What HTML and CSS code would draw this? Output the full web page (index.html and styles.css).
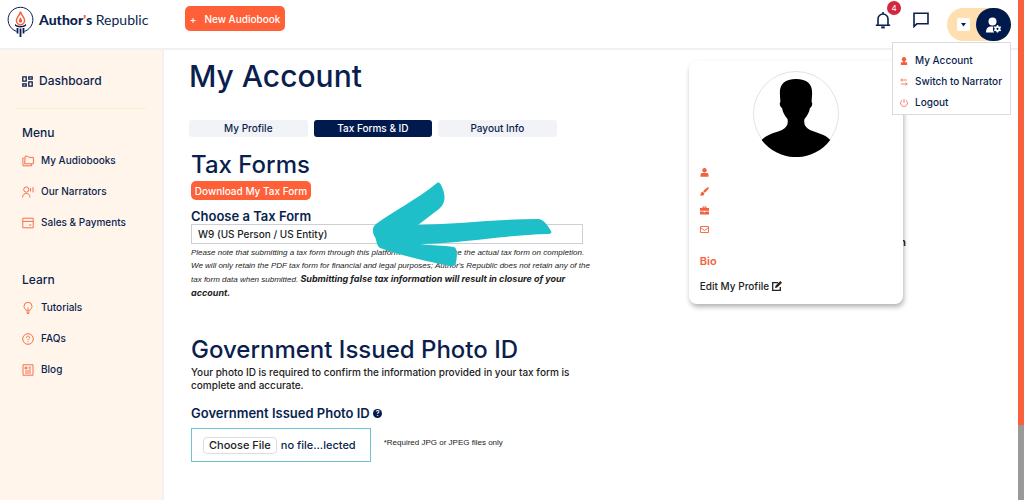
FILE: index.html
```html
<!DOCTYPE html>
<html lang="en">
<head>
  <meta charset="UTF-8">
  <title>My Account - Author's Republic</title>
  <meta name="viewport" content="width=device-width, initial-scale=1.0">
  <link rel="stylesheet" href="styles.css">
</head>
<body>
  <div class="page">
    <header class="topbar">
      <a class="logo" href="#">
        <svg width="27" height="31" viewBox="0 0 27 31">
          <path d="M9.5 25.4A12.4 12.4 0 1 1 17.5 25.4" fill="none" stroke="#0b1f4f" stroke-width="1"/>
          <path d="M13.5 5.5C13.9 9 17.6 11.2 17.6 14.6a4.1 4.1 0 0 1-8.2 0C9.4 11.2 13.1 9 13.5 5.5z" fill="none" stroke="#f4603e" stroke-width="1.5"/>
          <path d="M13.5 11c.4 1.600 1.700 2.400 1.700 4a1.700 1.700 0 0 1-3.400 0c0-1.600 1.300-2.400 1.700-4z" fill="#f4603e"/>
          <path d="M8 18c2.500 2.600 8.500 2.600 11 0v1.800c-3 2.200-8 2.200-11 0z" fill="#0b1f4f"/>
          <path d="M10.500 22v5.500M13.500 22.500V31M16.500 22v5.500" stroke="#0b1f4f" stroke-width="1.800"/>
        </svg>
        <span class="logo-text"><b>Author<i>'</i>s</b> Republic</span>
      </a>
      <button class="btn new-book"><span class="plus">+</span>New Audiobook</button>
      <div class="tools">
        <button class="icon-btn bell" aria-label="Notifications">
          <svg width="16" height="18" viewBox="0 0 16 18" fill="none" stroke="#0b1f4f" stroke-width="1.600">
            <path d="M3 14V8a5 5 0 0 1 10 0v6M.8 14.200h14.400M8 3V1"/>
            <path d="M6.200 16.400h3.600" stroke-width="2"/>
          </svg>
          <span class="badge">4</span>
        </button>
        <button class="icon-btn" aria-label="Messages">
          <svg width="16" height="16" viewBox="0 0 16 16" fill="none" stroke="#0b1f4f" stroke-width="1.600">
            <path d="M1 14.500V1.200h14v10.600H3.800z"/>
          </svg>
        </button>
        <div class="account">
          <button class="account-toggle" aria-label="Account menu">
            <span class="caret"><svg width="5" height="4" viewBox="0 0 5 4"><path d="M0 0h5L2.500 3.500z" fill="#0b1f4f"/></svg></span>
            <span class="account-icon">
              <svg width="16" height="16" viewBox="0 0 16 16" fill="#fff">
                <circle cx="6.500" cy="4.500" r="4"/>
                <path d="M0 15.500c0-4 2-6 5-6h2.500c-1 2-.7 4.500.7 6z"/>
                <circle cx="11.500" cy="11.800" r="2" fill="none" stroke="#fff" stroke-width="1.800"/>
                <path d="M11.500 8v1.500M11.500 14.100v1.500M8.200 9.900l1.400.8M13.400 12.900l1.400.8M8.200 13.700l1.400-.8M13.400 10.700l1.400-.8" stroke="#fff" stroke-width="1.500"/>
              </svg>
            </span>
          </button>
          <nav class="dropdown">
            <a href="#">
              <svg width="8" height="8" viewBox="0 0 8 8" fill="#f4603e"><circle cx="4" cy="2.200" r="2.200"/><path d="M3 4h2v1.200h2.200V8H.8V5.200H3z"/></svg>
              My Account
            </a>
            <a href="#">
              <svg width="8" height="8" viewBox="0 0 8 8" fill="none" stroke="#f4603e" stroke-width=".8"><path d="M7 2H.8M2.300.5L.8 2l1.500 1.500M1 6h6.200M5.700 4.500L7.200 6 5.700 7.500"/></svg>
              Switch to Narrator
            </a>
            <a href="#">
              <svg width="8" height="8" viewBox="0 0 8 8" fill="none" stroke="#f4603e" stroke-width=".8"><path d="M2.200 1.200a3.400 3.400 0 1 0 3.600 0M4 0v4"/></svg>
              Logout
            </a>
          </nav>
        </div>
      </div>
    </header>

    <div class="body">
      <aside class="sidebar">
        <a class="dashboard" href="#">
          <svg width="11" height="11" viewBox="0 0 11 11" fill="none" stroke="#0b1f4f" stroke-width="1.300"><path d="M.8.8h3.400v4.400H.8zM6.800.8h3.400v2.400H6.800zM.8 7.800h3.400v2.400H.8zM6.800 5.800h3.400v4.400H6.800z"/></svg>
          Dashboard
        </a>
        <h2>Menu</h2>
        <ul>
          <li><a href="#">
            <svg width="12" height="12" viewBox="0 0 12 12"><path d="M3.200 1.200h2.600l1 1.200h4.600v6.400H2.600zM2.600 3.200H.8L1 10.800h8.600V9"/></svg>
            My Audiobooks
          </a></li>
          <li><a href="#">
            <svg width="12" height="12" viewBox="0 0 12 12"><circle cx="4.300" cy="3.600" r="2.600"/><path d="M.5 11.500c.3-3 1.800-4 3.800-4s3.500 1 3.800 4M8.600 2v3.400M11 1v5.400"/></svg>
            Our Narrators
          </a></li>
          <li><a href="#">
            <svg width="12" height="12" viewBox="0 0 12 12"><path d="M.8 1.200h10.400v9.600H.8zM.8 4.400h10.400M7 8h2.400"/></svg>
            Sales &amp; Payments
          </a></li>
        </ul>
        <h2>Learn</h2>
        <ul>
          <li><a href="#">
            <svg width="12" height="12" viewBox="0 0 12 12"><path d="M4.300 8.800c0-1.500-2.300-2-2.300-4.500a4 4 0 0 1 8 0c0 2.500-2.300 3-2.300 4.500zM4.500 10.200h3M5 11.500h2M6 8.500V5.500"/></svg>
            Tutorials
          </a></li>
          <li><a href="#">
            <svg width="12" height="12" viewBox="0 0 12 12"><circle cx="6" cy="6" r="5.300"/><path d="M4.400 4.800c0-2.200 3.200-2.200 3.200-.2C7.600 5.800 6 5.800 6 7.200M6 8.300v1"/></svg>
            FAQs
          </a></li>
          <li><a href="#">
            <svg width="12" height="12" viewBox="0 0 12 12"><path d="M1 .8h10v10.400H1zM3 3.200h2.200v1.600H3zM6.800 3.200H9M6.800 5H9M3 7h6M3 9h6"/></svg>
            Blog
          </a></li>
        </ul>
      </aside>

      <main class="main">
        <section class="content">
          <h1>My Account</h1>
          <nav class="tabs">
            <a href="#">My Profile</a>
            <a class="active" href="#">Tax Forms &amp; ID</a>
            <a href="#">Payout Info</a>
          </nav>

          <div class="forms">
            <h2>Tax Forms</h2>
            <button class="btn download">Download My Tax Form</button>
            <label class="field-label" for="taxForm">Choose a Tax Form</label>
            <div class="select-wrap">
              <select id="taxForm">
                <option>W9 (US Person / US Entity)</option>
              </select>
              <svg class="arrow" width="180" height="84" viewBox="0 0 180 84">
                <path d="M4 42C20 30 44 18 65 1c2-1 3 0 4 2 5 10 5 18-2 24L46 43C86 42 125 37 166 37c5 0 9 5 13 12 1 2 0 3-3 3-43 1-84 9-128 10 12 2 23 1 34 3 4 2 3 9 2 16-1 3-3 3-6 3-24-5-48-10-70-18-4-3-3-7-5-11-2-3-4-9 1-13z" fill="#1fbfc9"/>
              </svg>
            </div>
            <p class="note">Please note that submitting a tax form through this platform does not replace the actual tax form on completion.<br>
              We will only retain the PDF tax form for financial and legal purposes; Author's Republic does not retain any of the<br>
              tax form data when submitted. <strong>Submitting false tax information will result in closure of your<br>
              account.</strong></p>

            <h2 class="photo-title">Government Issued Photo ID</h2>
            <p class="intro">Your photo ID is required to confirm the information provided in your tax form is complete and accurate.</p>
            <label class="field-label photo-label" for="photoId">Government Issued Photo ID <span class="help">?</span></label>
            <div class="upload">
              <div class="file-box">
                <span class="file-btn">Choose File</span>
                <span>no file...lected</span>
                <input type="file" id="photoId" accept="image/jpeg">
              </div>
              <small>*Required JPG or JPEG files only</small>
            </div>
          </div>
        </section>

        <aside class="profile">
          <span class="behind">n</span>
          <div class="card">
            <svg class="avatar" width="86" height="86" viewBox="0 0 86 86">
              <circle cx="43" cy="43" r="42.500" fill="#fff" stroke="#e2e2e2"/>
              <path d="M43 8C31 8 26 14 27 24c0 3 .4 5 .4 7-1.400 1-.4 5 1.600 6 1 5 3 8 5.500 11 1 5-.5 8-5.500 11-7 3-15 4-20.300 10A43 43 0 0 0 77.300 69C72 63 64 62 57 59c-5-3-6.500-6-5.500-11 2.500-3 4.500-6 5.500-11 2-1 3-5 1.600-6 0-2 .4-4 .4-7C60 14 55 8 43 8z"/>
            </svg>
            <ul class="details">
              <li><svg width="9" height="9" viewBox="0 0 9 9" fill="#f4603e"><circle cx="4.500" cy="2.300" r="2.200"/><path d="M.5 8.800V7c0-1.700 1-2 2.500-2h3c1.500 0 2.500.3 2.500 2v1.800z"/></svg></li>
              <li><svg width="9" height="9" viewBox="0 0 9 9" fill="#f4603e"><path d="M8.800.3C8.200-.4 5 1.800 3.200 4.200l1.500 1.500C7 4 9.500 1 8.800.3zM2.800 4.800c-1.500-.2-1.800 1-2 2-.2.700-.5 1.100-.8 1.400 1.800 1 4.400.5 4.300-1.900z"/></svg></li>
              <li><svg width="9" height="9" viewBox="0 0 9 9" fill="#f4603e"><path d="M2.500 2V.5h4V2H9v2.800H0V2zm1 0h2v-.6h-2zM0 5.400h3.700v.8h1.600v-.8H9v3H0z"/></svg></li>
              <li><svg width="9" height="9" viewBox="0 0 9 9" fill="none" stroke="#f4603e" stroke-width=".9"><path d="M.5 1.500h8v6h-8zM.5 2.500l4 3 4-3"/></svg></li>
            </ul>
            <h3>Bio</h3>
            <a class="edit" href="#">Edit My Profile
              <svg width="10" height="10" viewBox="0 0 10 10"><path d="M6 1.700H.7v7.600h7.600V6" fill="none" stroke="#222" stroke-width="1.300"/><path d="M8.300 0L10 1.700 5.200 6.500 3 7l.5-2.200z" fill="#222"/></svg>
            </a>
          </div>
        </aside>
      </main>
    </div>
  </div>
  <div class="scroll-track"><div class="scroll-thumb"></div></div>
</body>
</html>
```
FILE: styles.css
```css
* { box-sizing: border-box; }
body {
  margin: 0;
  display: flex;
  min-height: 100vh;
  font-family: Inter, 'Liberation Sans', sans-serif;
  font-size: 10px;
  font-weight: 500;
  color: #0b1f4f;
  background: #fff;
}
h1, h2, h3, p, ul { margin: 0; padding: 0; }
ul { list-style: none; }
a { color: inherit; text-decoration: none; }
button, select { font-family: inherit; color: inherit; cursor: pointer; }
svg { display: block; flex: none; }

.page { flex: 1; display: flex; flex-direction: column; }
.scroll-track { width: 6px; background: #999; }
.scroll-thumb { height: 85%; background: #f9603c; }

/* top bar */
.topbar {
  display: flex;
  align-items: flex-start;
  height: 50px;
  padding: 6px 7px 0;
  border-bottom: 2px solid #f1f1f4;
}
.logo { display: flex; gap: 5px; width: 178px; }
.logo-text {
  font-family: Lato, sans-serif;
  font-size: 14px;
  font-weight: 400;
  line-height: 27px;
  white-space: nowrap;
}
.logo-text b { font-weight: 900; }
.logo-text i { color: #f4603e; font-style: normal; }
.btn {
  border: none;
  border-radius: 5px;
  background: #ff6038;
  color: #fff;
  font-size: 10px;
  font-weight: 500;
  white-space: nowrap;
}
.new-book { height: 25px; width: 100px; padding: 0; }
.plus { margin-right: 8px; }
.tools { display: flex; gap: 22px; margin-left: auto; }
.icon-btn { position: relative; height: 28px; padding: 0; border: none; background: none; }
.badge {
  position: absolute;
  top: -5px;
  right: -10px;
  width: 14px;
  border-radius: 50%;
  background: #d3263f;
  color: #fff;
  font-size: 8px;
  line-height: 14px;
}
.account { position: relative; margin: 2px 0 0 -4px; }
.account-toggle {
  display: flex;
  align-items: center;
  height: 33px;
  padding: 0 0 0 10px;
  border: none;
  border-radius: 17px;
  background: #ffdfb0;
}
.caret {
  display: flex;
  align-items: center;
  justify-content: center;
  width: 13px;
  height: 13px;
  margin-right: 6px;
  background: #fff;
  border-radius: 2px;
}
.account-icon {
  display: flex;
  align-items: center;
  justify-content: center;
  width: 35px;
  height: 33px;
  border-radius: 17px;
  background: #001a4e;
}
.dropdown {
  position: absolute;
  top: 34px;
  right: 0;
  z-index: 3;
  width: 119px;
  padding: 7px 7px 1px;
  border: 1px solid #d9dbe0;
  background: #fff;
}
.dropdown a {
  display: flex;
  align-items: center;
  gap: 7px;
  font-size: 10px;
  line-height: 21px;
  white-space: nowrap;
}

/* left menu */
.body { flex: 1; display: flex; }
.sidebar {
  width: 164px;
  padding: 22px 16px;
  border-right: 2px solid #f1f1f4;
  background: #fff5ea;
}
.dashboard {
  display: flex;
  align-items: center;
  gap: 6px;
  padding: 0 6px 18px;
  border-bottom: 1px solid #fcebd2;
  font-size: 12px;
  line-height: 18px;
}
.sidebar h2 { margin: 15px 6px 3px; font-size: 12px; font-weight: 500; line-height: 18px; }
.sidebar ul { margin-bottom: 33px; }
.sidebar li a {
  display: flex;
  align-items: center;
  gap: 7px;
  padding-left: 6px;
  font-size: 10px;
  line-height: 31px;
  white-space: nowrap;
}
.sidebar li svg { fill: none; stroke: #f4704e; stroke-width: 1; }

/* account page */
.main {
  flex: 1;
  display: grid;
  grid-template-columns: minmax(0, 1fr) 30%;
  column-gap: 15%;
  align-items: start;
  padding: 10px 115px 0 25px;
}
h1 { font-size: 30px; font-weight: 500; line-height: 32px; }
.tabs {
  display: grid;
  grid-template-columns: repeat(3, 1fr);
  gap: 6px;
  margin: 28px 25px 0 0;
}
.tabs a {
  border-radius: 3px;
  background: #f1f3f6;
  font-size: 10px;
  line-height: 17px;
  text-align: center;
}
.tabs .active { background: #001a4e; color: #fff; }
.forms { padding: 12px 0 0 2px; }
.forms h2 { font-size: 24px; font-weight: 500; line-height: 32px; white-space: nowrap; }
.download { display: block; width: 120px; height: 19px; padding: 0; }
.field-label {
  display: block;
  margin-top: 8px;
  font-size: 13px;
  font-weight: 600;
  line-height: 16px;
}
.select-wrap { position: relative; margin-right: -1px; }
select {
  display: block;
  width: 100%;
  height: 20px;
  padding: 0 6px;
  border: 1px solid #ccd0d4;
  border-radius: 0;
  background: #fff;
  appearance: none;
  color: #222;
  font-size: 10px;
  font-weight: 500;
}
.arrow { position: absolute; top: -42px; left: 181px; pointer-events: none; }
.note {
  margin: 2px -16px 0 0;
  color: #222;
  font-family: 'Liberation Sans', sans-serif;
  font-size: 8px;
  font-style: italic;
  line-height: 13px;
}
.note strong { font-family: Inter, sans-serif; font-size: 9px; font-weight: 700; }
.forms .photo-title { margin-top: 34px; }
.intro { margin-right: 8px; color: #222; font-size: 10px; line-height: 13px; }
.photo-label { margin-top: 13px; }
.help {
  display: inline-block;
  width: 9px;
  border-radius: 50%;
  background: #001a4e;
  color: #fff;
  font-size: 7px;
  line-height: 9px;
  text-align: center;
  vertical-align: 2px;
}
.upload { display: flex; gap: 13px; margin-top: 7px; }
.file-box {
  position: relative;
  display: flex;
  align-items: center;
  gap: 4px;
  height: 34px;
  padding: 0 14px 0 11px;
  border: 1px solid #6fc3d0;
  font-size: 11px;
  white-space: nowrap;
}
.file-btn {
  padding: 0 5px;
  border: 1px solid #ddd;
  border-radius: 4px;
  color: #222;
  line-height: 15px;
}
.file-box input {
  position: absolute;
  inset: 0;
  width: 100%;
  opacity: 0;
  cursor: pointer;
}
.upload small {
  color: #222;
  font-family: 'Liberation Sans', sans-serif;
  font-size: 8px;
  line-height: 30px;
  white-space: nowrap;
}

/* profile card */
.profile { position: relative; margin-top: 1px; }
.behind {
  position: absolute;
  top: 174px;
  right: -3px;
  color: #222;
  font-size: 11px;
  font-weight: 600;
}
.card {
  position: relative;
  padding: 10px 11px;
  border-radius: 8px;
  background: #fff;
  box-shadow: 1px 3px 5px rgba(0, 0, 0, 0.3);
}
.avatar { margin: 0 auto 6px; }
.details li { display: flex; align-items: center; height: 19px; }
.card h3 { margin-top: 13px; color: #f4603e; font-size: 11px; font-weight: 600; line-height: 18px; }
.edit {
  display: flex;
  align-items: center;
  gap: 3px;
  margin-top: 8px;
  color: #222;
  font-size: 10px;
  line-height: 16px;
}
```
